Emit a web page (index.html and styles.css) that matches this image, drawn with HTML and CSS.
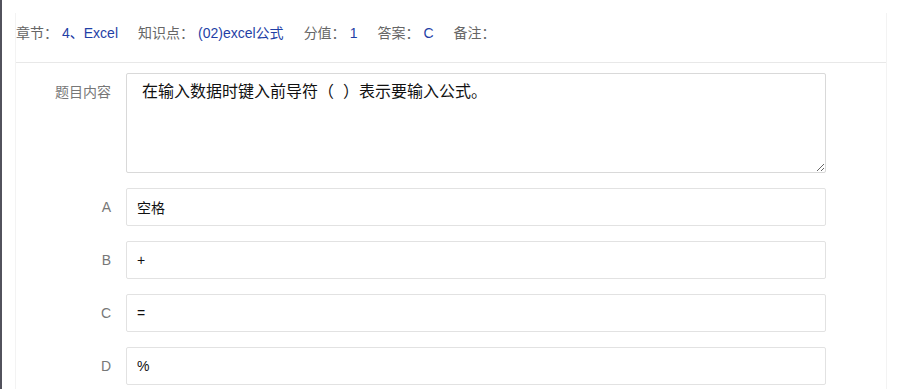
FILE: index.html
```html
<!DOCTYPE html>
<html>
<head>
  <meta charset="utf-8">
  <link rel="stylesheet" href="styles.css">
</head>
<body>
  <div class="page">
    <div class="card">
      <!-- Question meta -->
      <div class="meta">
        <div class="meta-item"><span class="meta-label">章节：</span><span class="meta-value">4、Excel</span></div>
        <div class="meta-item"><span class="meta-label">知识点：</span><span class="meta-value">(02)excel公式</span></div>
        <div class="meta-item"><span class="meta-label">分值：</span><span class="meta-value">1</span></div>
        <div class="meta-item"><span class="meta-label">答案：</span><span class="meta-value">C</span></div>
        <div class="meta-item"><span class="meta-label">备注：</span><span class="meta-value"></span></div>
      </div>

      <!-- Question body -->
      <div class="form">
        <div class="form-row">
          <label class="form-label">题目内容</label>
          <textarea class="form-textarea">在输入数据时键入前导符（  ）表示要输入公式。</textarea>
        </div>
        <div class="form-row">
          <label class="form-label">A</label>
          <input class="form-input" type="text" value="空格">
        </div>
        <div class="form-row">
          <label class="form-label">B</label>
          <input class="form-input" type="text" value="+">
        </div>
        <div class="form-row">
          <label class="form-label">C</label>
          <input class="form-input" type="text" value="=">
        </div>
        <div class="form-row">
          <label class="form-label">D</label>
          <input class="form-input" type="text" value="%">
        </div>
      </div>
    </div>
  </div>
</body>
</html>
```
FILE: styles.css
```css
html, body {
  height: 100%;
}

body {
  margin: 0;
  background: #fff;
  font-family: "Liberation Sans", Arial, "Noto Sans CJK SC", sans-serif;
  font-size: 14px;
  color: #333;
  border-left: 2px solid #52525c;
  box-sizing: border-box;
  overflow: hidden;
}

.page {
  padding: 13px 0 0 13px;
}

.card {
  width: 872px;
  box-sizing: border-box;
  border-left: 1px solid #f3f3f3;
  border-right: 1px solid #f3f3f3;
  min-height: calc(100vh - 13px);
}

/* Meta line */
.meta {
  display: flex;
  align-items: center;
  gap: 20px;
  padding: 10px 0 19px 0;
  line-height: 20px;
  border-bottom: 1px solid #e8e8e8;
}

.meta-item {
  display: flex;
  gap: 4px;
}

.meta-label {
  color: #666;
}

.meta-value {
  color: #1f3fa6;
}

/* Form */
.form {
  padding-top: 10px;
  display: flex;
  flex-direction: column;
  gap: 15px;
}

.form-row {
  display: flex;
  align-items: flex-start;
  gap: 15px;
}

.form-label {
  width: 95px;
  flex-shrink: 0;
  text-align: right;
  padding-top: 10px;
  line-height: 18px;
  color: #777;
}

.form-textarea {
  width: 700px;
  height: 100px;
  box-sizing: border-box;
  border: 1px solid #d9d9d9;
  border-radius: 2px;
  padding: 9px 15px;
  font-family: "Liberation Sans", Arial, "Noto Sans CJK SC", sans-serif;
  font-size: 16px;
  line-height: 18px;
  color: #111;
  margin: 0;
}

.form-input {
  width: 700px;
  height: 38px;
  box-sizing: border-box;
  border: 1px solid #e2e2e2;
  border-radius: 2px;
  padding: 0 10px;
  font-family: "Liberation Sans", Arial, "Noto Sans CJK SC", sans-serif;
  font-size: 14px;
  color: #111;
  margin: 0;
  outline: none;
}
```
